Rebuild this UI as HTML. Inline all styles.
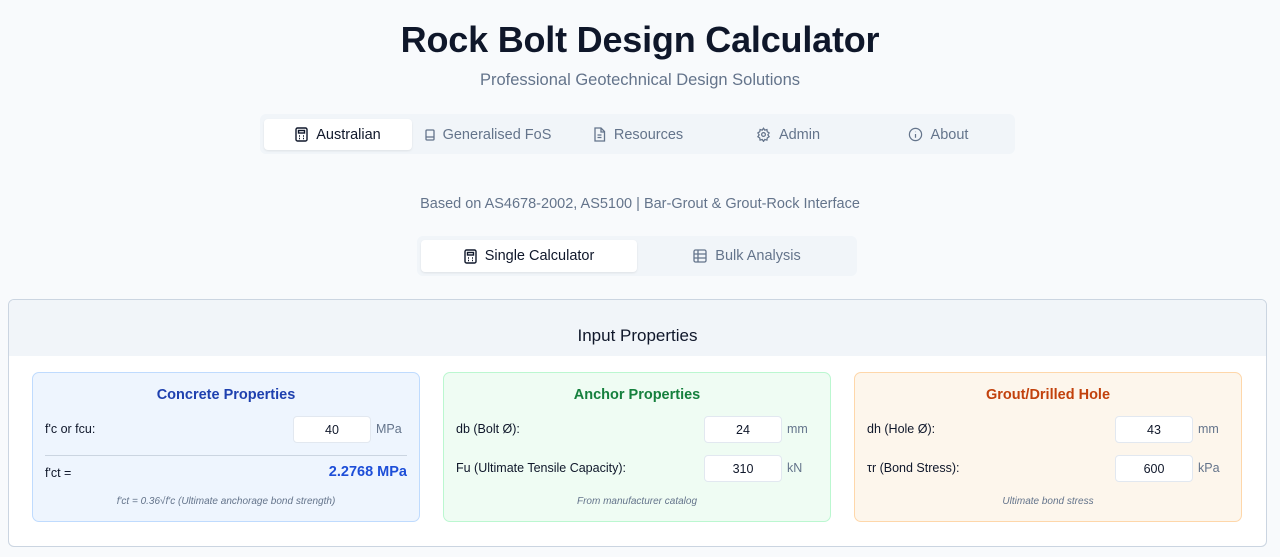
<!DOCTYPE html>
<html><head><meta charset="utf-8"><style>
*{box-sizing:border-box;margin:0;padding:0}
body{width:1280px;height:557px;overflow:hidden;background:#f8fafc;font-family:"Liberation Sans",sans-serif;color:#0f172a;position:relative}
.abs{position:absolute}
h1{position:absolute;top:19px;left:0;width:1280px;text-align:center;font-size:36px;font-weight:700;color:#0f172a;letter-spacing:-0.2px}
.sub{top:71px;left:0;width:1280px;text-align:center;font-size:16.5px;color:#64748b}
.tabs{left:260px;top:114px;width:755px;height:40px;background:#f1f5f9;border-radius:6px}
.tab{position:absolute;top:5px;height:31px;width:148px;display:flex;align-items:center;justify-content:center;gap:8px;font-size:14.5px;color:#64748b}
.tab.on{background:#fff;color:#0f172a;border-radius:4px;box-shadow:0 1px 2px rgba(0,0,0,.08)}
.based{top:196px;left:0;width:1280px;text-align:center;font-size:14.5px;color:#64748b}
.tabs2{left:417px;top:236px;width:440px;height:40px;background:#f1f5f9;border-radius:6px}
.tab2{position:absolute;top:4px;height:32px;width:216px;display:flex;align-items:center;justify-content:center;gap:8px;font-size:14.5px;color:#64748b}
.card{left:8px;top:299px;width:1259px;height:248px;background:#fff;border:1px solid #cbd5e1;border-radius:6px;overflow:hidden}
.head{position:absolute;left:0;top:0;width:100%;height:56px;background:#f1f5f9;text-align:center;line-height:72px;font-size:17px;font-weight:500}
.p{position:absolute;top:72px;width:388px;height:150px;border-radius:7px;border:1px solid}
.p h3{position:absolute;top:14px;width:100%;text-align:center;font-size:14.5px;font-weight:700}
.lbl{position:absolute;left:12px;font-size:12.5px;color:#0f172a}
.in{position:absolute;left:260px;width:78px;height:27px;background:#fff;border-radius:4px;text-align:center;line-height:27px;font-size:12.5px;border:1px solid #e2e8f0}
.u{position:absolute;left:343px;font-size:12.5px;color:#64748b}
.note{position:absolute;top:123px;width:100%;text-align:center;font-size:10px;font-style:italic;color:#64748b}
</style></head><body>
<h1>Rock Bolt Design Calculator</h1>
<div class="abs sub">Professional Geotechnical Design Solutions</div>
<div class="abs tabs">
<div class="tab on" style="left:4px"><svg width="13" height="15" viewBox="0 0 13 15" fill="none" stroke="#0f172a" stroke-width="1.4"><rect x="1" y="1" width="11" height="13" rx="1.5"/><rect x="3.5" y="3.5" width="6" height="2.5"/><path d="M4 9h1M8 9h1M4 11.5h1M8 11.5h1"/></svg>Australian</div>
<div class="tab" style="left:154px"><svg width="10" height="12" viewBox="0 0 10 12" fill="none" stroke="#64748b" stroke-width="1.3"><rect x="1" y="1" width="8" height="10" rx="1"/><path d="M1 8h8"/></svg>Generalised FoS</div>
<div class="tab" style="left:304px"><svg width="13" height="15" viewBox="0 0 13 15" fill="none" stroke="#64748b" stroke-width="1.3"><path d="M2 1h6l3.5 3.5V14H2z"/><path d="M8 1v4h3.5M4.5 8h4M4.5 10.5h4"/></svg>Resources</div>
<div class="tab" style="left:454px"><svg width="15" height="15" viewBox="0 0 24 24" fill="none" stroke="#64748b" stroke-width="2"><circle cx="12" cy="12" r="3"/><path d="M12 2l2 3 3.5-1 .5 3.5 3 2-2 3 2 3-3 2-.5 3.5-3.5-1-2 3-2-3-3.5 1-.5-3.5-3-2 2-3-2-3 3-2 .5-3.5 3.5 1z"/></svg>Admin</div>
<div class="tab" style="left:604px"><svg width="15" height="15" viewBox="0 0 16 16" fill="none" stroke="#64748b" stroke-width="1.3"><circle cx="8" cy="8" r="6.5"/><path d="M8 7.5v4M8 5v.5"/></svg>About</div>
</div>
<div class="abs based">Based on AS4678-2002, AS5100 | Bar-Grout &amp; Grout-Rock Interface</div>
<div class="abs tabs2">
<div class="tab2" style="left:4px;background:#fff;color:#0f172a;border-radius:4px;box-shadow:0 1px 2px rgba(0,0,0,.08)"><svg width="13" height="15" viewBox="0 0 13 15" fill="none" stroke="#0f172a" stroke-width="1.4"><rect x="1" y="1" width="11" height="13" rx="1.5"/><rect x="3.5" y="3.5" width="6" height="2.5"/><path d="M4 9h1M8 9h1M4 11.5h1M8 11.5h1"/></svg>Single Calculator</div>
<div class="tab2" style="left:222px"><svg width="14" height="14" viewBox="0 0 14 14" fill="none" stroke="#64748b" stroke-width="1.3"><rect x="1" y="1" width="12" height="12" rx="1.5"/><path d="M1 5h12M1 9h12M5 1v12"/></svg>Bulk Analysis</div>
</div>
<div class="abs card">
<div class="head">Input Properties</div>
<div class="p" style="left:23px;background:#eef5fe;border-color:#bfdbfe">
<h3 style="color:#1e40af">Concrete Properties</h3>
<div class="lbl" style="top:49px">f'c or fcu:</div><div class="in" style="top:43px">40</div><div class="u" style="top:49px">MPa</div>
<div style="position:absolute;left:12px;right:12px;top:82px;border-top:1px solid #cbd5e1"></div>
<div class="lbl" style="top:93px">f'ct =</div>
<div style="position:absolute;right:12px;top:91px;font-size:14.5px;font-weight:700;color:#1d4ed8">2.2768 MPa</div>
<div class="note">f'ct = 0.36√f'c (Ultimate anchorage bond strength)</div>
</div>
<div class="p" style="left:434px;background:#effcf3;border-color:#bbf7d0">
<h3 style="color:#15803d">Anchor Properties</h3>
<div class="lbl" style="top:49px">db (Bolt Ø):</div><div class="in" style="top:43px">24</div><div class="u" style="top:49px">mm</div>
<div class="lbl" style="top:88px">Fu (Ultimate Tensile Capacity):</div><div class="in" style="top:82px">310</div><div class="u" style="top:88px">kN</div>
<div class="note">From manufacturer catalog</div>
</div>
<div class="p" style="left:845px;background:#fdf6ec;border-color:#fed7aa">
<h3 style="color:#c2410c">Grout/Drilled Hole</h3>
<div class="lbl" style="top:49px">dh (Hole Ø):</div><div class="in" style="top:43px">43</div><div class="u" style="top:49px">mm</div>
<div class="lbl" style="top:88px">τr (Bond Stress):</div><div class="in" style="top:82px">600</div><div class="u" style="top:88px">kPa</div>
<div class="note">Ultimate bond stress</div>
</div>
</div>
</body></html>
